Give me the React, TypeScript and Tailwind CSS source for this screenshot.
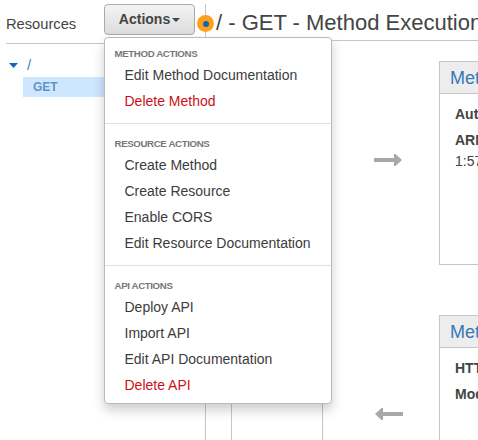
const groups = [
  {
    title: 'METHOD ACTIONS',
    items: [{ label: 'Edit Method Documentation' }, { label: 'Delete Method', danger: true }],
  },
  {
    title: 'RESOURCE ACTIONS',
    items: [
      { label: 'Create Method' },
      { label: 'Create Resource' },
      { label: 'Enable CORS' },
      { label: 'Edit Resource Documentation' },
    ],
  },
  {
    title: 'API ACTIONS',
    items: [
      { label: 'Deploy API' },
      { label: 'Import API' },
      { label: 'Edit API Documentation' },
      { label: 'Delete API', danger: true },
    ],
  },
];

function ActionsMenu() {
  return (
    <div className="absolute left-0 top-[33px] z-20 w-[228px] rounded-[4px] border border-[#b9bbbb] bg-white py-[5px] shadow-[0_6px_12px_rgba(0,0,0,0.2)]">
      {groups.map((group, i) => (
        <div key={group.title} className={i > 0 ? 'mt-[9px] border-t border-[#e0e0e0] pt-[9px]' : ''}>
          <div className="h-[19px] pl-[9.500px] pt-px text-[9.700px] font-bold leading-[19px] tracking-[-0.370px] text-[#777]">
            {group.title}
          </div>
          {group.items.map((item) => (
            <div
              key={item.label}
              className={
                item.danger
                  ? 'h-[26px] pl-[19.500px] text-[14px] leading-[26px] text-[#cc1016]'
                  : 'h-[26px] pl-[19.500px] text-[14px] leading-[26px] text-[#3c3c3c]'
              }
            >
              {item.label}
            </div>
          ))}
        </div>
      ))}
    </div>
  );
}

function Arrow({ left }: { left?: boolean }) {
  return (
    <svg width="28" height="12" viewBox="0 0 28 12" className={left ? 'ml-px rotate-180' : ''}>
      <path d="M0 4h20V0h1.500L28 6l-6.500 6H20V8H0z" fill="#a8a8a8" />
    </svg>
  );
}

function Sidebar() {
  return (
    <aside className="mt-1 h-[436px] w-[206px] shrink-0 border-r border-[#c6c6c6] pl-[6px]">
      <div className="flex h-10 justify-between border-b border-[#c6c6c6]">
        <h2 className="pt-[10px] text-[14.700px] leading-5 text-[#444]">Resources</h2>
        <div className="relative mr-[10px] w-[91px]">
          <button className="flex h-[31px] w-full items-center justify-center gap-[2px] rounded-[4px] border border-[#aaa] bg-linear-to-b from-[#f4f4f4] to-[#dcdcdc] text-[14px] font-bold text-[#444]">
            Actions
            <svg width="8" height="4" viewBox="0 0 8 4">
              <path d="M0 0h8L4 4z" fill="#444" />
            </svg>
          </button>
          <ActionsMenu />
        </div>
      </div>
      <div className="mt-[10px] flex h-[23px] items-center gap-[9px] pl-[3px]">
        <svg width="9" height="5" viewBox="0 0 9 5">
          <path d="M0 0h9L4.500 5z" fill="#1166bb" />
        </svg>
        <span className="text-[15px] text-[#4485be]">/</span>
      </div>
      <div className="ml-[17px] h-5 bg-[#cfe6ff] pl-[10px] text-[12px] font-bold leading-5 text-[#5e96c8]">
        GET
      </div>
    </aside>
  );
}

function Card({ lines, className }: { lines: [string, string?][]; className: string }) {
  return (
    <section className={'w-[240px] shrink-0 border border-[#c6c6c6] bg-white ' + className}>
      <h3 className="h-8 border-b border-[#c6c6c6] bg-[#ededed] pl-[10px] text-[18px] leading-[32px] text-[#337ab7]">
        Method
      </h3>
      <div className="pl-[15px] pt-[10px]">
        {lines.map(([name, value]) => (
          <div key={name} className="mb-[6px] text-[14px] leading-5 text-[#444]">
            <b>{name}</b>
            {value && <div className="pt-px">{value}</div>}
          </div>
        ))}
      </div>
    </section>
  );
}

export default function App() {
  return (
    <div className="flex h-[440px] w-[478px] overflow-hidden bg-white font-['Liberation_Sans',Arial,sans-serif]">
      <Sidebar />
      <main className="relative w-[272px] shrink-0">
        <div className="absolute -left-[9px] top-[15px] flex size-[17px] items-center justify-center rounded-full bg-[#ff9f1c]">
          <span className="size-[6px] rounded-full bg-[#1166bb]" />
        </div>
        <h1 className="h-[41px] whitespace-nowrap border-b border-[#c6c6c6] pl-[10px] pt-[8px] text-[22px] leading-[30px] text-[#444]">
          / - GET - Method Execution
        </h1>
        <div className="flex h-[399px]">
          <div className="ml-[25px] mt-5 w-[92px] shrink-0 border-x border-[#c6c6c6]" />
          <div className="w-[116px] shrink-0 pl-[51px] pt-[113px]">
            <Arrow />
            <div className="h-[242px]" />
            <Arrow left />
          </div>
          <div className="shrink-0 pt-5">
            <Card
              className="h-[204px]"
              lines={[['Auth:'], ['ARN:', '1:574']]}
            />
            <Card className="mt-[50px] h-[200px]" lines={[['HTTP'], ['Models']]} />
          </div>
        </div>
      </main>
    </div>
  );
}
